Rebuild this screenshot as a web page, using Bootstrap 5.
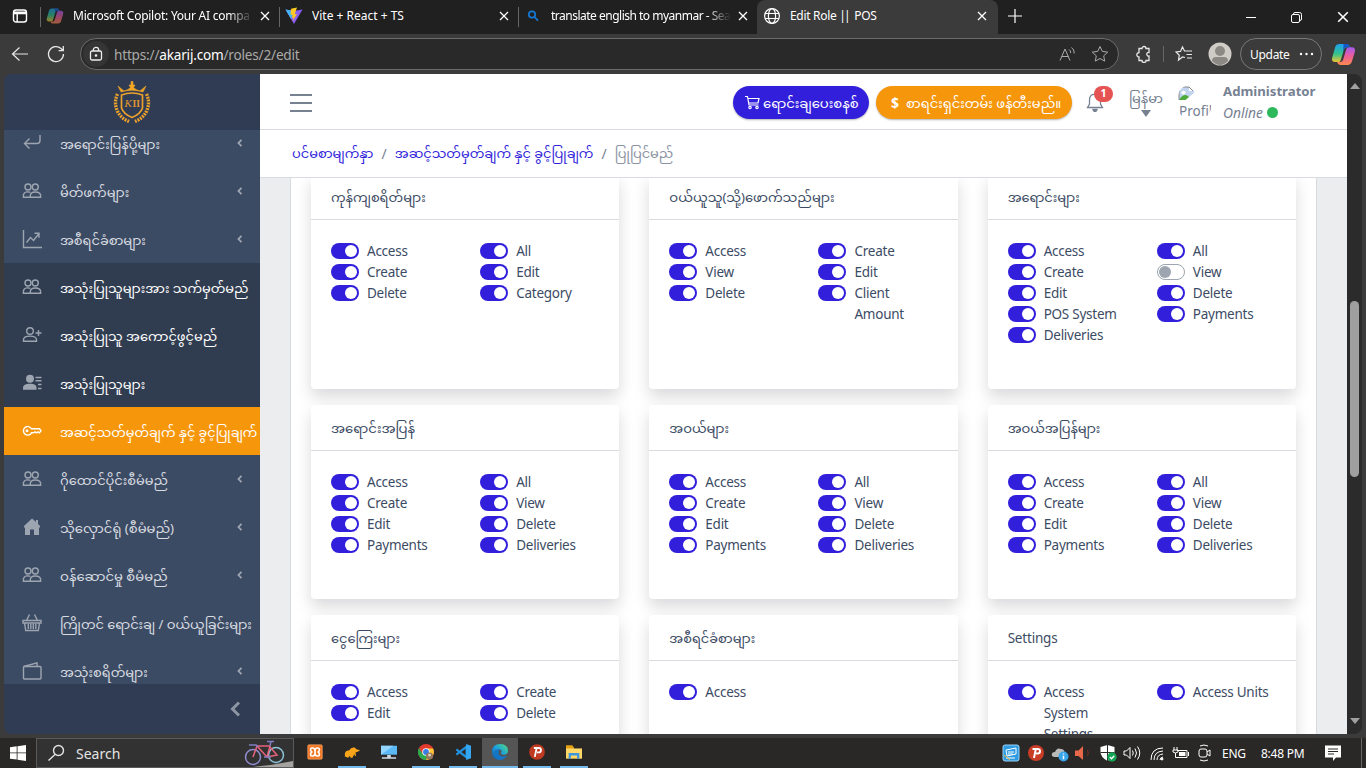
<!DOCTYPE html>
<html lang="my">
<head>
<meta charset="utf-8">
<title>Edit Role || POS</title>
<meta name="viewport" content="width=device-width, initial-scale=1">
<link href="https://cdn.jsdelivr.net/npm/bootstrap@5.3.0/dist/css/bootstrap.min.css" rel="stylesheet">
<style>
:root{--ui:"Noto Sans","Open Sans","Noto Sans Myanmar",sans-serif}
body{width:1366px;height:768px;overflow:hidden;background:#3b3b3b;font-family:var(--ui);font-size:12.98px;line-height:21px;color:#3c4b64}
svg{display:block;flex:none}
svg:not([stroke]){stroke:currentColor}
svg:not([fill]){fill:none}
.nw{white-space:nowrap}
.tabs-bar{height:34px;background:#202020;color:#fff;font-size:12px;line-height:18px;letter-spacing:-.15px}
.b-tab{width:239px;padding:0 7px 2px 6px;position:relative}
.b-tab svg.fav{width:18px;height:18px}
.b-tab .ttl{margin-left:9px;width:180px;overflow:hidden;white-space:nowrap}
.b-tab .ttl.fade-end{-webkit-mask-image:linear-gradient(90deg,#000 86%,transparent 100%);mask-image:linear-gradient(90deg,#000 86%,transparent 100%)}
.b-tab .x{margin-left:7px;width:10px;height:10px}
.b-tab+.b-tab:not(.cur)::before,.b-first::before{content:"";position:absolute;left:0;top:7px;height:20px;width:1px;background:#666}
.b-tab.cur{width:241px;background:#3b3b3b;border-radius:8px 8px 0 0}
.tool{height:40px;color:#e8e8e8}
.url{width:1039px;height:32px;border:1px solid #6c6c6c;border-radius:16px;background:#292929;font-size:13.6px;letter-spacing:-.2px;color:#aaa}
.url .lock{width:26px;height:26px;border-radius:50%;background:#353535;margin-left:2px;color:#eee}
.upd{width:82px;height:32px;border:1px solid #777;border-radius:16px;font-size:12px;color:#fff}
.page-win{width:1358px;height:660px;margin-left:4px;border-radius:8px;overflow:hidden;background:#2b2b2b}
.side{width:256px;background:#3c4b64;color:#d8dbe0}
.brand-box{height:56px;background:#303c54}
.side-nav{height:554px;overflow:hidden}
.side-nav>div{margin-top:-11px}
.s-item{height:48px;padding:0 15px 0 18px;white-space:nowrap}
.s-item svg{width:20px;height:20px;color:#9da5b1;stroke-width:1.4}
.s-item .t{margin-left:18px;position:relative;top:1px;flex:1 0 auto}
.s-item svg.chev{width:10px;height:10px;margin-right:0;stroke-width:1.8}
.s-dark{background:#303c50;color:#fff}
.s-on{background:#f6960b;color:#fff;padding-right:0}
.s-on svg{color:#fff}
.s-foot{height:50px;background:#303c54;color:#8d95a4;padding-right:18px}
.main-col{width:1087px;background:#ebedef}
.top-h{height:56px;background:#fff;border-bottom:1px solid #d8dbe0}
.pill{height:33px;border-radius:17px;color:#fff;box-shadow:0 1px 2px rgba(0,0,0,.3);white-space:nowrap;position:relative;top:1px}
.pill span{position:relative;top:1px}
.pill-a{width:136px;background:#321fdb;padding-left:12px}
.pill-b{width:196px;background:#f6960b;padding-left:15px;margin-left:7px}
.crumbs{height:48px;background:#fff;border-bottom:1px solid #d8dbe0;padding:0 0 0 32px;white-space:nowrap}
.crumbs a{color:#321fdb;text-decoration:none}
.crumbs i{font-style:normal;font-size:14px;color:#768192;width:21.5px;text-align:center}
.crumbs b{font-weight:400;color:#8a93a2}
.sheet{width:1027px;margin-left:30px;background:#fff;border:1px solid #d8dbe0;border-width:0 1px;height:556px;overflow:hidden}
.sheet .row{margin:0 5px;--bs-gutter-x:30px}
.perm-card{background:#fff;border-radius:4px;box-shadow:0 8px 16px rgba(0,0,21,.15);margin-bottom:16px}
.perm-card header{height:46px;border-bottom:1px solid #d8dbe0;padding:13px 20px 0;white-space:nowrap}
.perm-card .bd{padding:21px 20px;font-size:13.5px;letter-spacing:-.25px}
.sheet .r1{margin-top:-4px}
.r1 .perm-card{height:215px}.r2 .perm-card{height:194px}.r3 .perm-card{height:200px}
.sheet .bd .row{margin:0 -15px}
.sw{position:relative;width:28px;height:16px;border-radius:8px;background:#321fdb;margin:2px 8px 0 0;flex:none}
.sw::after{content:"";position:absolute;left:14px;top:2px;width:12px;height:12px;border-radius:50%;background:#fff}
.sw.off{background:#fff;border:1px solid #9da5b1}
.sw.off::after{left:1px;top:1px;background:#9da5b1}
.sb{width:15px}
.task{height:30px;margin-top:4px;background:#292827;color:#fff}
.start{width:36px}
.srch{width:258px;height:30px;border:1px solid #595959;background:#323232;font-size:14px;color:#e4e4e4;padding-left:10px;overflow:hidden}
.ti{width:28px;height:30px;margin-right:9px;border-bottom:2px solid transparent}
.ti.run{border-color:#76b9ed}
.ti.act{width:36px;margin:0 5px 0 -4px;background:#555}
.ti svg{width:18px;height:18px}
.ti svg.sm{width:16px;height:16px}
.tray{font-size:12px;letter-spacing:-.25px}
.tray>svg{width:18px;height:18px}
</style>
</head>
<body>
<svg width="0" height="0" class="position-absolute">
<defs>
<linearGradient id="cpa" x1="0" y1="0" x2="0" y2="1"><stop offset="0" stop-color="#1aa0f0"/><stop offset=".55" stop-color="#35c48a"/><stop offset="1" stop-color="#f3c331"/></linearGradient>
<linearGradient id="cpb" x1="0" y1="0" x2="0" y2="1"><stop offset="0" stop-color="#a45cf0"/><stop offset=".5" stop-color="#ee5c9a"/><stop offset="1" stop-color="#fb8a4c"/></linearGradient>
<linearGradient id="edg" x1="0" y1="1" x2="1" y2="0"><stop offset="0" stop-color="#0c59a4"/><stop offset=".5" stop-color="#1b9de2"/><stop offset="1" stop-color="#4fe07a"/></linearGradient>
</defs>
<symbol id="close" viewBox="0 0 10 10"><path d="M1 1l8 8M9 1L1 9" stroke-width="1.3"/></symbol>
<symbol id="chev" viewBox="0 0 10 10"><path d="M6.500 1.800L3.500 5l3 3.200"/></symbol>
<symbol id="people" viewBox="0 0 20 20"><circle cx="6" cy="6" r="3"/><circle cx="13.300" cy="6" r="3"/><path d="M8.300 16.200v-1.400c0-2.300 2-3.800 5-3.800s5.300 1.500 5.300 3.800v1.400zM8 16.200H1.400v-1.400c0-2 1.300-3.600 3.600-3.900 1.200-.1 2.300 0 3.300.5"/></symbol>
<symbol id="copilot" viewBox="0 0 24 24"><path stroke="none" fill="url(#cpa)" d="M8 2h7c2 0 2.600 1.500 3 3h-3c-1.500 0-2.300 1-2.700 2.500L9.500 17c-.4 1.400-1.300 2.300-3 2.300H4c-2.600 0-3.500-2-2.900-4.300L4 5c.6-2 2-3 4-3z"/><path stroke="none" fill="url(#cpb)" d="M16 22H9c-2 0-2.700-1.400-3-2.700h2.600c1.700 0 2.700-1 3.100-2.400L14.500 7.500C15 6 15.800 5 17.400 5H20c2.600 0 3.500 2 2.900 4.300L20 19c-.6 2-2 3-4 3z"/><path stroke="none" fill="#1758c9" d="M12 2h3c2 0 2.600 1.500 3 3h-3c-1.500 0-2.300 1-2.700 2.500l-.6 2z"/></symbol>
</svg>

<!-- browser tabs -->
<div class="tabs-bar d-flex">
  <div class="d-flex align-items-center" style="width:40px;padding:0 0 2px 12px"><svg width="16" height="16" viewBox="0 0 16 16" stroke-width="1.400"><rect x="1.500" y="2" width="13" height="12" rx="2.500"/><path d="M1.500 5.500h13M5.200 5.500V14M2 4.200h12"/></svg></div>
  <div class="b-tab b-first d-flex align-items-center"><svg class="fav" style="opacity:.6"><use href="#copilot"/></svg><span class="ttl fade-end" style="letter-spacing:-.25px">Microsoft Copilot: Your AI compa</span><svg class="x"><use href="#close"/></svg></div>
  <div class="b-tab d-flex align-items-center"><svg class="fav" viewBox="0 0 18 18" stroke="none"><path fill="#8a5cf0" d="M.5 2.500L9 17 17.500 2.500 9 4z"/><path fill="#45b5f5" d="M.5 2.500L6 12 9 4z"/><path fill="#ffc921" d="M12 .5L6 1.800 5.600 8l2-.4-.7 3.300 1.700-.5-1.200 4.100 4.600-7.600-2.300.4z"/></svg><span class="ttl" style="letter-spacing:0">Vite + React + TS</span><svg class="x"><use href="#close"/></svg></div>
  <div class="b-tab d-flex align-items-center"><svg class="fav" viewBox="0 0 18 18" stroke="#1478d4" stroke-width="1.700"><circle cx="8" cy="7.500" r="3.200"/><path d="M10.500 10l3.500 3.700"/></svg><span class="ttl fade-end" style="letter-spacing:-.5px">translate english to myanmar - Sea</span><svg class="x"><use href="#close"/></svg></div>
  <div class="b-tab cur d-flex align-items-center"><svg class="fav" viewBox="0 0 18 18" stroke-width="1.200"><circle cx="9" cy="9" r="7.400"/><ellipse cx="9" cy="9" rx="3.600" ry="7.400"/><path d="M2 6.500h14M2 11.500h14"/></svg><span class="ttl" style="letter-spacing:-.3px">Edit Role <span style="letter-spacing:-2px">||</span>&nbsp; POS</span><svg class="x"><use href="#close"/></svg></div>
  <svg width="18" height="18" class="ms-2" style="margin-top:7px" viewBox="0 0 18 18" stroke-width="1.200"><path d="M9 2v14M2 9h14"/></svg>
  <div class="ms-auto d-flex align-items-center" style="gap:35px;padding-right:17px">
    <svg width="10" height="10" viewBox="0 0 10 10"><path d="M0 5.500h10"/></svg>
    <svg width="11" height="11" viewBox="0 0 11 11"><rect x=".5" y="2.500" width="8" height="8" rx="1.500"/><path d="M2.500 2.500V2Q2.500.5 4 .5h4.500q2 0 2 2V7q0 1.500-1.500 1.500"/></svg>
    <svg width="12" height="12"><use href="#close"/></svg>
  </div>
</div>

<!-- browser toolbar -->
<div class="tool d-flex align-items-center">
  <svg style="margin-left:11px" width="18" height="18" viewBox="0 0 18 18" stroke-width="1.200"><path d="M17 9H1.500M8.500 2.500L1.500 9l7 6.500"/></svg>
  <svg style="margin:0 15px 0 18px" width="18" height="18" viewBox="0 0 18 18" stroke-width="1.300"><path d="M16.500 9A7.500 7.500 0 1 1 14 3.500L16 5.500M16.300 1v4.700h-4.700"/></svg>
  <div class="url d-flex align-items-center">
    <span class="lock d-flex align-items-center justify-content-center"><svg width="14" height="16" viewBox="0 0 14 16" stroke-width="1.300"><rect x="1.500" y="5" width="11" height="9" rx="1.500"/><path d="M4.300 5V4a2.700 2.700 0 0 1 5.400 0v1"/><circle cx="7" cy="9.500" r=".7" fill="currentColor"/></svg></span>
    <span class="nw" style="margin-left:5px">https://<span class="text-white">akarij.com</span>/roles/2/edit</span>
    <svg class="ms-auto" width="17" height="17" viewBox="0 0 17 17"><path d="M1 14.500L6 3l5 11.500M2.800 10.500h6.400M10 3.500q1.800 1 1.700 3.500M12.500 1.500q3 2 2.700 6"/></svg>
    <svg style="margin:0 9px 0 15px" width="18" height="18" viewBox="0 0 18 18"><path d="M9 1.500l2.300 4.900 5.400.7-4 3.700 1 5.300L9 13.500l-4.700 2.600 1-5.300-4-3.700 5.400-.7z"/></svg>
  </div>
  <svg style="margin-left:15px" width="18" height="18" viewBox="0 0 18 18" stroke-width="1.300"><path d="M5 3.500h3a2 2 0 1 1 4 0h3v4a1.800 1.800 0 1 0 0 3.500v4.500h-3a2 2 0 0 1-4 0H5V12a2.200 2.200 0 1 1 0-4.400z"/></svg>
  <span style="width:1px;height:16px;background:#666;margin:0 11px 0 11px"></span>
  <svg width="18" height="18" viewBox="0 0 18 18" stroke-width="1.200"><path d="M10 12.500L7.500 12l-4 3 .8-4.800L1 7l4.500-.6L7.500 2l2 4H17M11.500 9.500H17M12 13h5"/></svg>
  <svg style="margin-left:15px" width="24" height="24" viewBox="0 0 24 24" stroke="none"><circle cx="12" cy="12" r="11.500" fill="#cfccc8"/><circle cx="12" cy="9" r="5" fill="#8c8884"/><path fill="#8c8884" d="M4 19q0-4 4-4h8q4 0 4 4-8 8-16 0z"/></svg>
  <div class="upd d-flex align-items-center" style="margin-left:8px;padding-left:9px;letter-spacing:-.3px">Update<svg style="margin-left:9px" width="15" height="4" viewBox="0 0 15 4" stroke="none" fill="#fff"><circle cx="2" cy="2" r="1.200"/><circle cx="7.500" cy="2" r="1.200"/><circle cx="13" cy="2" r="1.200"/></svg></div>
  <svg style="margin-left:9px" width="25" height="25"><use href="#copilot"/></svg>
</div>

<div class="page-win d-flex">
  <aside class="side flex-shrink-0">
    <div class="brand-box d-flex justify-content-center">
      <svg style="margin-top:6px" width="38" height="44" viewBox="0 0 38 44" stroke="#eca12b" stroke-width="1.700">
        <path d="M8.500 15Q19 11 29.500 15v13q-2 6-10.500 9.500Q10.500 34 8.500 28z"/>
        <path fill="#f5a623" stroke-width=".6" d="M8 12L5 6l6 5 4-1.500 2.500-2-1.500-2.500h2V1.500h2V5h2l-1.500 2.500 2.500 2 4 1.500 6-5-3 6Q19 8.500 8 12z"/>
        <path stroke-width="3.400" stroke-dasharray="1.900 1" d="M4.500 14C-.5 24 4 37 16 41.500M33.500 14c5 10 .5 23-11.500 27.500"/>
        <text x="11.500" y="27" font-family="Liberation Serif" font-style="italic" font-size="11" fill="#e0952d" stroke="none">K</text><text x="19.500" y="27" font-family="Liberation Serif" font-weight="bold" font-size="9.500" fill="#e0952d" stroke="none">II</text>
      </svg>
    </div>
    <nav class="side-nav"><div>
      <div class="s-item d-flex align-items-center"><svg viewBox="0 0 20 20"><path d="M18 2v5.500q0 3-3 3H2.500M7.500 5.500l-5 5 5 5"/></svg><span class="t">အရောင်းပြန်ပို့များ</span><svg class="chev"><use href="#chev"/></svg></div>
      <div class="s-item d-flex align-items-center"><svg><use href="#people"/></svg><span class="t">မိတ်ဖက်များ</span><svg class="chev"><use href="#chev"/></svg></div>
      <div class="s-item d-flex align-items-center"><svg viewBox="0 0 20 20"><path d="M1.500 1v17.500H20M4.500 13.500l4-5 3 3 5.500-7M12.500 4.300H17v4.500"/></svg><span class="t">အစီရင်ခံစာများ</span><svg class="chev"><use href="#chev"/></svg></div>
      <div class="s-item s-dark d-flex align-items-center"><svg><use href="#people"/></svg><span class="t">အသုံးပြုသူများအား သက်မှတ်မည်</span></div>
      <div class="s-item s-dark d-flex align-items-center"><svg viewBox="0 0 20 20"><circle cx="8" cy="6" r="3.300"/><path d="M1.500 16.200v-1.400c0-2.200 2.500-3.700 6.500-3.700s6.500 1.500 6.500 3.700v1.400zM16.500 5v6M13.500 8h6"/></svg><span class="t">အသုံးပြုသူ အကောင့်ဖွင့်မည်</span></div>
      <div class="s-item s-dark d-flex align-items-center"><svg viewBox="0 0 20 20"><g fill="currentColor" stroke="none"><circle cx="8" cy="5.800" r="4"/><path d="M1 16.800v-2c0-2.600 3-4 7-4s6.500 1.400 6.500 4v2z"/></g><path d="M13.500 4.500h6M13.500 7.800h6M16 11.500h3.500M16 15.500h3.500"/></svg><span class="t">အသုံးပြုသူများ</span></div>
      <div class="s-item s-on d-flex align-items-center"><svg viewBox="0 0 20 20"><path d="M9.500 7.800H17.500l1.500 2-1.500 2-1.500-1-1.500 1-1.500-1-1.500 1H9.500a4.300 4.300 0 1 1 0-4z"/><circle cx="5" cy="9.800" r=".8"/></svg><span class="t" style="font-size:12.900px">အဆင့်သတ်မှတ်ချက် နှင့် ခွင့်ပြုချက်</span></div>
      <div class="s-item d-flex align-items-center"><svg><use href="#people"/></svg><span class="t">ဂိုထောင်ပိုင်းစီမံမည်</span><svg class="chev"><use href="#chev"/></svg></div>
      <div class="s-item d-flex align-items-center"><svg viewBox="0 0 20 20"><path fill="currentColor" stroke="none" d="M10 1.500L2 9v1.500h1V18h5v-5.500h4V18h5v-7.500h1V9l-2-2V3h-2v2z"/></svg><span class="t" style="font-size:13.200px">သိုလှောင်ရုံ (စီမံမည်)</span><svg class="chev"><use href="#chev"/></svg></div>
      <div class="s-item d-flex align-items-center"><svg><use href="#people"/></svg><span class="t" style="font-size:13.200px">ဝန်ဆောင်မှု စီမံမည်</span><svg class="chev"><use href="#chev"/></svg></div>
      <div class="s-item d-flex align-items-center"><svg viewBox="0 0 20 20"><path d="M1 7.500h18v2.500H1zM2.500 10l1.200 7.500h12.600L17.500 10M4.500 7.500l3-6M15.500 7.500l-3-6M6.300 11v5M8.800 11v5M11.300 11v5M13.800 11v5"/></svg><span class="t">ကြိုတင် ရောင်းချ / ဝယ်ယူခြင်းများ</span></div>
      <div class="s-item d-flex align-items-center"><svg viewBox="0 0 20 20"><rect x="1.500" y="5.500" width="17.500" height="12.500" rx="1"/><path d="M1.700 5.500L15 1.800v3.500"/></svg><span class="t">အသုံးစရိတ်များ</span><svg class="chev"><use href="#chev"/></svg></div>
    </div></nav>
    <div class="s-foot d-flex align-items-center justify-content-end"><svg width="14" height="16" viewBox="0 0 14 16" stroke-width="3"><path d="M11 1.500L4.500 8l6.500 6.500"/></svg></div>
  </aside>

  <main class="main-col flex-shrink-0">
    <div class="top-h d-flex align-items-center">
      <svg style="margin:2px 0 0 29px;color:#768192" width="24" height="20" viewBox="0 0 24 20" stroke-width="1.800"><path d="M1 2h22M1 10h22M1 18h22"/></svg>
      <div class="pill pill-a d-flex align-items-center" style="margin-left:420px"><svg width="15" height="15" viewBox="0 0 15 15" stroke-width="1.200"><path d="M0 1.500h2.500L4 10h9.500M3 3.500h11L13 8H3.800"/><circle cx="5" cy="12.500" r="1.200"/><circle cx="12" cy="12.500" r="1.200"/></svg><span style="margin-left:3px;font-size:13.200px">ရောင်းချပေးစနစ်</span></div>
      <div class="pill pill-b d-flex align-items-center"><b style="font-size:14px">$</b><span style="margin-left:7px;font-size:13.100px">စာရင်းရှင်းတမ်း ဖန်တီးမည်။</span></div>
      <div class="position-relative" style="margin-left:14px;color:#768192"><svg width="18" height="20" viewBox="0 0 18 20" stroke-width="1.300"><path d="M1.500 15.500h15L14.500 12V8q0-5-5.500-5.500T3.500 8v4z"/><path fill="currentColor" d="M7 17.500h4q-.5 2-2 2t-2-2z"/></svg>
        <span class="badge rounded-pill position-absolute d-flex align-items-center justify-content-center p-0" style="left:8px;top:-6px;width:19px;height:16px;background:#e55353;font-size:10.500px">1</span></div>
      <div class="text-center nw" style="margin-left:24px;width:36px;color:#768192;padding-top:2px"><div style="height:22px">မြန်မာ</div><svg width="12" height="8" style="margin:0 0 0 12px" viewBox="0 0 12 8" fill="currentColor" stroke="none"><path d="M1 0h10L6 7z"/></svg></div>
      <div style="margin-left:14px;width:33px;height:34px;overflow:hidden;color:#768192;border-radius:12px;font-size:13.500px" class="nw"><svg width="17" height="17" viewBox="0 0 17 17" stroke="none"><path fill="#c2d4f0" d="M1 2h10l5 4v9H1z"/><path fill="#fff" d="M3 8q2-4 5-1l-2 3zM11 2v4h5z"/><path fill="#4eaa3b" d="M1 15q5-8 10-3l3 3z"/><path stroke="#888" fill="none" d="M1 15V2h10l4 4"/><path fill="#fff" d="M5 17L16 8v9z"/></svg><div style="margin:-1px 0 0 1px">Profil</div></div>
      <div class="nw" style="margin-left:12px;color:#768192;font-size:13.200px"><div class="fw-bold" style="margin-top:1px">Administrator</div><div class="d-flex align-items-center"><em style="font-size:13.800px">Online</em><span class="rounded-circle" style="width:11px;height:11px;margin-left:4px;background:#2eb85c"></span></div></div>
    </div>
    <div class="crumbs d-flex align-items-center"><a href="#">ပင်မစာမျက်နှာ</a><i>/</i><a href="#">အဆင့်သတ်မှတ်ချက် နှင့် ခွင့်ပြုချက်</a><i>/</i><b>ပြုပြင်မည်</b></div>
    <div class="sheet">
      <div class="row r1">
        <div class="col-4"><section class="perm-card"><header>ကုန်ကျစရိတ်များ</header><div class="bd"><div class="row">
          <div class="col-6 d-flex"><span class="sw"></span>Access</div><div class="col-6 d-flex"><span class="sw"></span>All</div>
          <div class="col-6 d-flex"><span class="sw"></span>Create</div><div class="col-6 d-flex"><span class="sw"></span>Edit</div>
          <div class="col-6 d-flex"><span class="sw"></span>Delete</div><div class="col-6 d-flex"><span class="sw"></span>Category</div>
        </div></div></section></div>
        <div class="col-4"><section class="perm-card"><header style="font-size:13.100px">ဝယ်ယူသူ(သို့)ဖောက်သည်များ</header><div class="bd"><div class="row">
          <div class="col-6 d-flex"><span class="sw"></span>Access</div><div class="col-6 d-flex"><span class="sw"></span>Create</div>
          <div class="col-6 d-flex"><span class="sw"></span>View</div><div class="col-6 d-flex"><span class="sw"></span>Edit</div>
          <div class="col-6 d-flex"><span class="sw"></span>Delete</div><div class="col-6 d-flex"><span class="sw"></span>Client<br>Amount</div>
        </div></div></section></div>
        <div class="col-4"><section class="perm-card"><header>အရောင်းများ</header><div class="bd"><div class="row">
          <div class="col-6 d-flex"><span class="sw"></span>Access</div><div class="col-6 d-flex"><span class="sw"></span>All</div>
          <div class="col-6 d-flex"><span class="sw"></span>Create</div><div class="col-6 d-flex"><span class="sw off"></span>View</div>
          <div class="col-6 d-flex"><span class="sw"></span>Edit</div><div class="col-6 d-flex"><span class="sw"></span>Delete</div>
          <div class="col-6 d-flex"><span class="sw"></span>POS System</div><div class="col-6 d-flex"><span class="sw"></span>Payments</div>
          <div class="col-6 d-flex"><span class="sw"></span>Deliveries</div>
        </div></div></section></div>
      </div>
      <div class="row r2">
        <div class="col-4"><section class="perm-card"><header style="font-size:13.200px">အရောင်းအပြန်</header><div class="bd"><div class="row">
          <div class="col-6 d-flex"><span class="sw"></span>Access</div><div class="col-6 d-flex"><span class="sw"></span>All</div>
          <div class="col-6 d-flex"><span class="sw"></span>Create</div><div class="col-6 d-flex"><span class="sw"></span>View</div>
          <div class="col-6 d-flex"><span class="sw"></span>Edit</div><div class="col-6 d-flex"><span class="sw"></span>Delete</div>
          <div class="col-6 d-flex"><span class="sw"></span>Payments</div><div class="col-6 d-flex"><span class="sw"></span>Deliveries</div>
        </div></div></section></div>
        <div class="col-4"><section class="perm-card"><header>အဝယ်များ</header><div class="bd"><div class="row">
          <div class="col-6 d-flex"><span class="sw"></span>Access</div><div class="col-6 d-flex"><span class="sw"></span>All</div>
          <div class="col-6 d-flex"><span class="sw"></span>Create</div><div class="col-6 d-flex"><span class="sw"></span>View</div>
          <div class="col-6 d-flex"><span class="sw"></span>Edit</div><div class="col-6 d-flex"><span class="sw"></span>Delete</div>
          <div class="col-6 d-flex"><span class="sw"></span>Payments</div><div class="col-6 d-flex"><span class="sw"></span>Deliveries</div>
        </div></div></section></div>
        <div class="col-4"><section class="perm-card"><header>အဝယ်အပြန်များ</header><div class="bd"><div class="row">
          <div class="col-6 d-flex"><span class="sw"></span>Access</div><div class="col-6 d-flex"><span class="sw"></span>All</div>
          <div class="col-6 d-flex"><span class="sw"></span>Create</div><div class="col-6 d-flex"><span class="sw"></span>View</div>
          <div class="col-6 d-flex"><span class="sw"></span>Edit</div><div class="col-6 d-flex"><span class="sw"></span>Delete</div>
          <div class="col-6 d-flex"><span class="sw"></span>Payments</div><div class="col-6 d-flex"><span class="sw"></span>Deliveries</div>
        </div></div></section></div>
      </div>
      <div class="row r3">
        <div class="col-4"><section class="perm-card"><header>ငွေကြေးများ</header><div class="bd"><div class="row">
          <div class="col-6 d-flex"><span class="sw"></span>Access</div><div class="col-6 d-flex"><span class="sw"></span>Create</div>
          <div class="col-6 d-flex"><span class="sw"></span>Edit</div><div class="col-6 d-flex"><span class="sw"></span>Delete</div>
        </div></div></section></div>
        <div class="col-4"><section class="perm-card"><header>အစီရင်ခံစာများ</header><div class="bd"><div class="row">
          <div class="col-6 d-flex"><span class="sw"></span>Access</div>
        </div></div></section></div>
        <div class="col-4"><section class="perm-card"><header style="font-size:13.500px;letter-spacing:-.2px">Settings</header><div class="bd"><div class="row">
          <div class="col-6 d-flex"><span class="sw"></span>Access<br>System<br>Settings</div><div class="col-6 d-flex"><span class="sw"></span><span class="nw">Access Units</span></div>
        </div></div></section></div>
      </div>
    </div>
  </main>

  <div class="sb d-flex flex-column align-items-center">
    <svg style="margin-top:9px" width="10" height="7" viewBox="0 0 10 7" fill="#a0a0a0" stroke="none"><path d="M5 0l5 6H0z"/></svg>
    <span style="width:9px;height:176px;border-radius:5px;background:#9f9f9f;margin-top:211px"></span>
    <svg class="mt-auto" style="margin-bottom:9px" width="10" height="7" viewBox="0 0 10 7" fill="#a0a0a0" stroke="none"><path d="M0 0h10L5 6z"/></svg>
  </div>
</div>

<!-- taskbar -->
<div class="task d-flex align-items-center">
  <div class="start d-flex justify-content-center"><svg width="16" height="16" viewBox="0 0 16 16" fill="#fff" stroke="none"><path d="M0 2.300L6.700 1.300v6.200H0zM7.500 1.200L16 0v7.500H7.500zM0 8.300h6.700v6.300L0 13.700zM7.500 8.300H16V16l-8.500-1.200z"/></svg></div>
  <div class="srch d-flex align-items-center"><svg width="18" height="18" viewBox="0 0 18 18" stroke-width="1.400"><circle cx="11.500" cy="6.500" r="5"/><path d="M8 10.500L1.500 16.500"/></svg><span style="margin-left:11px">Search</span>
    <svg class="ms-auto" width="58" height="30" viewBox="0 0 58 30"><path fill="#a5a39f" stroke="none" d="M0 30q30-1 58-7v7z"/><g stroke-width="1.500"><circle cx="18" cy="19" r="7.500" stroke="#8e8dd0"/><circle cx="41" cy="17" r="7.500" stroke="#8cc2d6"/><path stroke="#e8627c" d="M18 19l4-11 10 11 3-11H22M35 9l7 8-10 2"/><path stroke="#7d7ec0" d="M14 7h7l2 2M32 3.500h7M35 8l1-5M29 19h7"/></g></svg></div>
  <div class="d-flex" style="margin-left:7px">
    <div class="ti d-flex align-items-center justify-content-center"><svg class="sm" viewBox="0 0 18 18"><rect x="1" y="1" width="16" height="16" rx="1" fill="#f37623" stroke="#f6a061"/><path stroke="#fff" stroke-width="1.800" d="M6.500 4.500h-1q-1.500 0-1.500 2T6 9q-2 .5-2 2.500t1.500 2h1Q9 13.500 9 9T11.500 4.500h1q1.500 0 1.500 2T12 9q2 .5 2 2.500t-1.500 2h-1Q9 13.500 9 9T6.500 4.500z"/></svg></div>
    <div class="ti run d-flex align-items-center justify-content-center"><svg class="sm" viewBox="0 0 18 18" stroke="none" fill="#f9a51a"><path d="M1 14q-1-7 5-7 2-4 6-3l2 2 4 1-2 1.500-3 1 .5 4h-1l-1-2-2 4H7.500l-1-2-2 2z"/></svg></div>
    <div class="ti d-flex align-items-center justify-content-center"><svg class="sm" viewBox="0 0 18 18" stroke="none"><path fill="#5cb9f5" d="M0 2h18v10H0z"/><path fill="#93d5ff" d="M0 12V2h14z"/><path fill="#d2dbe3" d="M7 12.500h4V15h6v1.700H1V15h6z"/></svg></div>
    <div class="ti run d-flex align-items-center justify-content-center"><svg class="sm" viewBox="0 0 18 18" stroke="none"><circle cx="9" cy="9" r="9" fill="#e33b2e"/><path fill="#2ca94f" d="M1.200 4.500A9 9 0 0 0 9 18l3.800-7H5z"/><path fill="#fcc934" d="M9 18a9 9 0 0 0 7.900-13H9l4 6z"/><circle cx="9" cy="9" r="4.200" fill="#fff"/><circle cx="9" cy="9" r="3.300" fill="#3a7ee8"/><circle cx="13" cy="13.500" r="4" fill="#93785c"/><circle cx="13" cy="12.500" r="1.600" fill="#e5d7c6"/></svg></div>
    <div class="ti run d-flex align-items-center justify-content-center"><svg class="sm" viewBox="0 0 18 18"><path d="M1.500 6L13 15V3L1.500 12" stroke="#2292df" stroke-width="2.400" stroke-linejoin="round"/><path fill="#35a7f0" stroke="none" d="M12.500 0L18 2v14l-5.500 2z"/></svg></div>
    <div class="ti run act d-flex align-items-center justify-content-center"><svg class="sm" viewBox="0 0 18 18" stroke="none"><path fill="url(#edg)" d="M0 9Q0 0 9.500 0 18 .5 18 7.500q0 4.500-5 4.500-3 0-3-1.800Q11.500 9 10.500 7 7 4 2 9.500q1 7 8 8.500Q0 18 0 9z"/><path fill="#1674c4" d="M1.500 11Q4 5 9.500 6.500q-3 2-1.500 5.500 3 3.500 9 1-3 5-8 5-6-1-7.500-7z"/></svg></div>
    <div class="ti run d-flex align-items-center justify-content-center"><svg class="sm" viewBox="0 0 18 18"><circle cx="9" cy="9" r="8.800" fill="#bf3a20" stroke="none"/><path stroke="#fff" stroke-width="2" d="M5.500 4.500h5.500q2.500 0 2.500 2.500T11 9.500H9M6.500 14.500L8.500 5"/></svg></div>
    <div class="ti run d-flex align-items-center justify-content-center"><svg class="sm" viewBox="0 0 18 18" stroke="none"><path fill="#e3a010" d="M0 1.500h7L9 4v4H0z"/><path fill="#ffd867" d="M0 5h18v11.500H0z"/><path fill="#3d96dd" d="M3 10h12v6.500h-2.500V13h-7v3.500H3z"/></svg></div>
  </div>
  <div class="tray d-flex align-items-center ms-auto">
    <svg viewBox="0 0 18 18"><rect x="1" y="1" width="16" height="16" rx="2" fill="#2e9be3" stroke="#9bd3f5"/><path stroke="#fff" d="M4 6l10-2v6l-9 2zM6 8h6M4 14h9M6 10h5"/><path stroke="#f2b632" d="M2 11l6 5"/></svg>
    <svg style="margin-left:7px" viewBox="0 0 18 18"><circle cx="9" cy="9" r="8" fill="#c93d27" stroke="none"/><path stroke="#fff" stroke-width="2" d="M5.500 5h5q2.500 0 2.500 2.200t-2.500 2.200H9M7 14L8.700 5.500"/></svg>
    <svg style="margin-left:6px" viewBox="0 0 18 18" stroke="none"><path fill="#b9b9b9" d="M1 12q-1-4 3-4 2-5 6-3 3 0 3.500 3L9 13H3z"/><circle cx="12.500" cy="12.500" r="5" fill="#38a5ea"/><path stroke="#fff" stroke-width="1.500" d="M12.500 9.500v1M12.500 11.800v3.500"/></svg>
    <svg style="margin-left:5px" viewBox="0 0 18 18" stroke="none"><path fill="#e8694a" d="M1 6.500h3.500L9 2v14l-4.500-4H1z"/><path stroke="#7d2c22" fill="none" d="M13.500 6q1.500 3 0 6"/></svg>
    <svg style="margin-left:7px" viewBox="0 0 18 18" stroke="none"><path fill="#fff" d="M8.500 1l7 2v5q0 5-7 9-7-4-7-9V3z"/><path stroke="#292827" d="M8.500 1v16M1.500 8.500h14"/><circle cx="13" cy="13" r="4.700" fill="#13a355"/><path stroke="#fff" fill="none" stroke-width="1.300" d="M10.800 13l1.700 1.700 2.800-3"/></svg>
    <svg style="margin-left:6px" viewBox="0 0 18 18"><path d="M1 7h2.500L7 3.500v11L3.500 11H1zM9.500 6.500q1.500 2.500 0 5M12 4.500q3 4.500 0 9M14.500 2.500q4.500 6.500 0 13"/></svg>
    <svg style="margin-left:7px" viewBox="0 0 18 18"><path d="M3 16Q3 4 15 4M6 16q0-8.500 9-9M9 16q0-5.500 6-6M12 16q0-2.500 3-3"/><circle cx="14" cy="15" r="1" fill="#fff"/></svg>
    <svg style="margin-left:5px" viewBox="0 0 18 18"><path d="M6 6.500h10v7H5M3 3v3M6 3v3M2 6h5v2q-2.500 2-5 0zM4.500 9v4.500h3M17.500 8v4"/><path fill="#fff" stroke="none" d="M8 8h6.500v4H8z"/></svg>
    <svg style="margin-left:7px" viewBox="0 0 18 18"><rect x="3" y="5" width="8" height="8" rx="2"/><path d="M11 8l3-2v6l-3-2M4 2q4-2 8 0M4 16q4 2 8 0"/></svg>
    <span style="margin-left:8px;width:24px">ENG</span><span class="nw" style="margin-left:15px;width:43px">8:48 PM</span>
    <svg style="margin-left:20px;margin-right:19px" viewBox="0 0 18 18" stroke="none"><path fill="#fff" d="M1 1.500h16v12h-5L9 17v-3.500H1z"/><path stroke="#292827" d="M4 5h10M4 7.500h10M4 10h6"/></svg>
    <span style="width:1px;height:30px;background:#666;margin-right:4px"></span>
  </div>
</div>
<script src="https://cdn.jsdelivr.net/npm/bootstrap@5.3.0/dist/js/bootstrap.bundle.min.js"></script>
</body>
</html>
